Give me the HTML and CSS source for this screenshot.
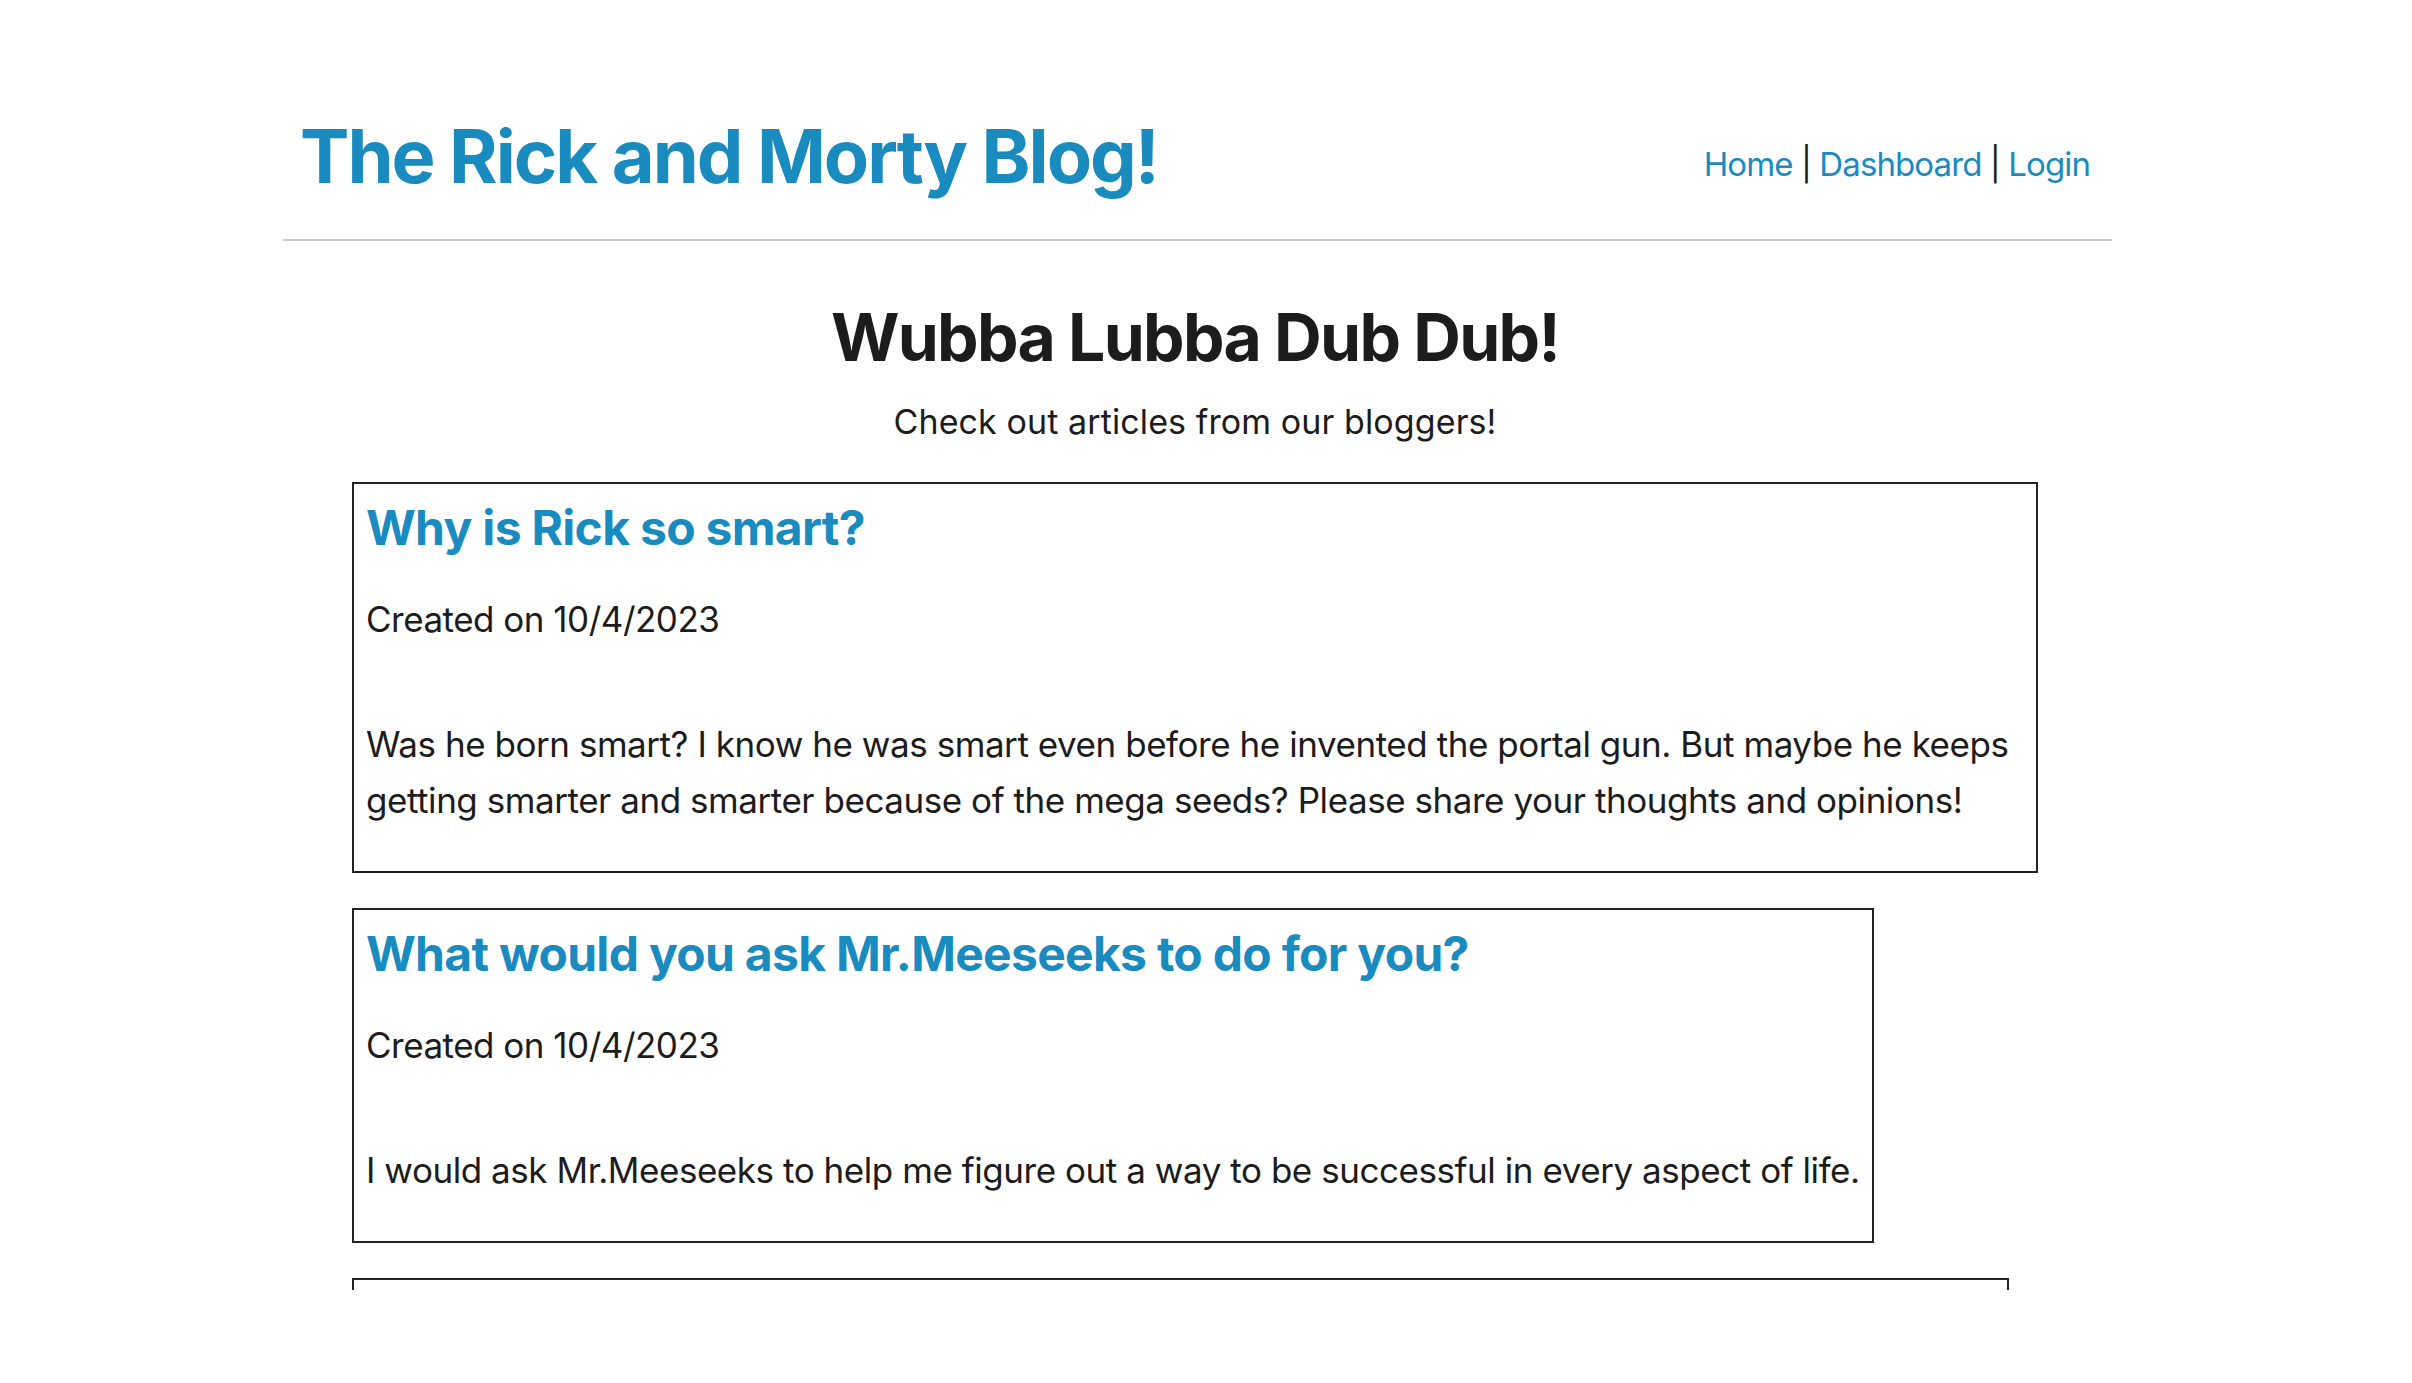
FILE: index.html
```html
<!DOCTYPE html>
<html lang="en">
<head>
<meta charset="utf-8">
<title>The Rick and Morty Blog!</title>
<link rel="stylesheet" href="styles.css">
</head>
<body>
<div class="page">
  <header class="site-header">
    <h1 class="site-title">The Rick and Morty Blog!</h1>
    <nav class="site-nav">
      <a href="#">Home</a> | <a href="#">Dashboard</a> | <a href="#">Login</a>
    </nav>
  </header>
  <main class="main">
    <h2 class="hero-title">Wubba Lubba Dub Dub!</h2>
    <p class="hero-sub">Check out articles from our bloggers!</p>
    <section class="posts">
      <article class="post">
        <h3 class="post-title">Why is Rick so smart?</h3>
        <p class="post-date">Created on 10/4/2023</p>
        <p class="post-body">Was he born smart? I know he was smart even before he invented the portal gun. But maybe he keeps getting smarter and smarter because of the mega seeds? Please share your thoughts and opinions!</p>
      </article>
      <article class="post">
        <h3 class="post-title">What would you ask Mr.Meeseeks to do for you?</h3>
        <p class="post-date">Created on 10/4/2023</p>
        <p class="post-body">I would ask Mr.Meeseeks to help me figure out a way to be successful in every aspect of life.</p>
      </article>
      <article class="post post-third">
        <h3 class="post-title">Which adventure was your favorite?</h3>
        <p class="post-date">Created on 10/4/2023</p>
        <p class="post-body">Tell us which Rick and Morty adventure you enjoyed the most and why it stands out from all the others.</p>
      </article>
    </section>
  </main>
</div>
</body>
</html>
```

FILE: styles.css
```css
html, body {
  margin: 0;
  padding: 0;
  background: #ffffff;
}

body {
  font-family: Inter, "Noto Sans", "Liberation Sans", sans-serif;
  color: #1c1c1c;
}

.page {
  width: 1829px;
  margin-left: 283px;
  height: 1290px;
  overflow: hidden;
}

.site-header {
  display: flex;
  justify-content: space-between;
  align-items: center;
  padding: 119px 22px 46px 17px;
  border-bottom: 2px solid #cccccc;
}

.site-title {
  margin: 0;
  font-size: 74px;
  line-height: 1;
  font-weight: 700;
  color: #1a8bbf;
  letter-spacing: -2px;
}

.site-nav {
  font-size: 33px;
  line-height: 1;
  padding-top: 16px;
  color: #1c1c1c;
  letter-spacing: -0.9px;
}

.site-nav a {
  color: #1a8bbf;
  text-decoration: none;
}

.main {
  padding: 63px 74px 0 69px;
}

.hero-title {
  margin: 0;
  text-align: center;
  font-size: 66px;
  line-height: 1;
  font-weight: 700;
  letter-spacing: -1.7px;
}

.hero-sub {
  margin: 35px 0 0;
  text-align: center;
  font-size: 34px;
  line-height: 1;
  letter-spacing: 0.1px;
}

.posts {
  display: flex;
  flex-direction: column;
  align-items: flex-start;
  gap: 35px;
  margin-top: 43px;
}

.post {
  border: 2px solid #222222;
  padding: 12px 12px 13px;
}

.post-third {
  width: 1629px;
}

.post-title {
  margin: 8px 0 0;
  font-size: 48px;
  line-height: 1;
  font-weight: 700;
  color: #1a8bbf;
  letter-spacing: -0.7px;
}

.post-date {
  margin: 39px 0 0;
  font-size: 35px;
  line-height: 56px;
  letter-spacing: -0.5px;
}

.post-body {
  margin: 69px 0 30px;
  font-size: 35px;
  line-height: 56px;
  letter-spacing: -0.45px;
}
```
